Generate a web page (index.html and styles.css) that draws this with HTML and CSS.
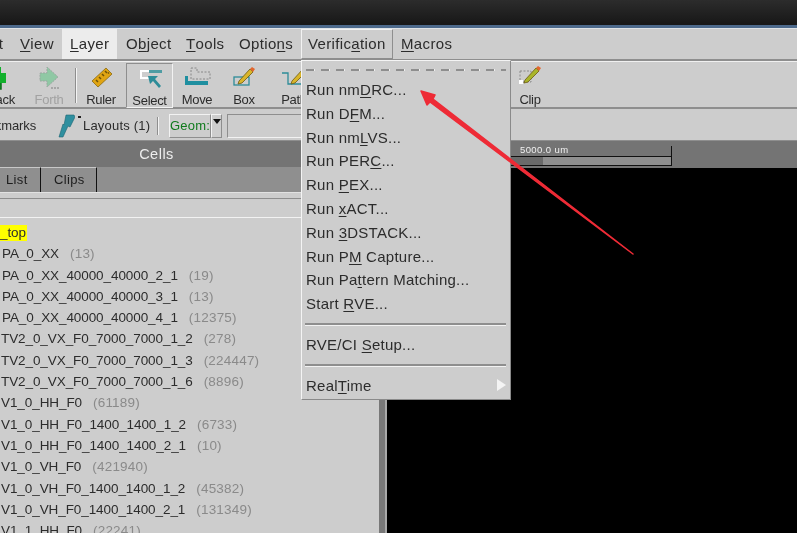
FILE: index.html
```html
<!DOCTYPE html>
<html lang="en">
<head>
<meta charset="utf-8">
<title>Layout editor</title>
<link rel="stylesheet" href="styles.css">
</head>
<body>
<div class="app">
  <div class="titlebar"></div>
  <nav class="menubar">
    <span class="m m-edit">Edit</span>
    <span class="m m-view"><u>V</u>iew</span>
    <span class="m m-layer"><u>L</u>ayer</span>
    <span class="m m-object">O<u>b</u>ject</span>
    <span class="m m-tools"><u>T</u>ools</span>
    <span class="m m-options">Optio<u>n</u>s</span>
    <span class="m m-verif">Verific<u>a</u>tion</span>
    <span class="m m-macros"><u>M</u>acros</span>
  </nav>
  <div class="toolbar">
    <div class="tool t-back">
      <svg class="ico ico-over" viewBox="10 0 24 24"><path d="M11 2h11v6h5v10h-5v6H11v-6H5V8h6z" fill="#12b02c"/><path d="M22 18v6H11" fill="none" stroke="#0a6e1a" stroke-width="1.5"/></svg>
      <span>Back</span>
    </div>
    <div class="tool t-forth">
      <svg class="ico" viewBox="0 0 24 24"><path d="M3 8h7V2l11 10-11 10v-6H3z" fill="#8fc8a4" stroke="#9aa7a0" stroke-dasharray="2 1"/><path d="M14 23h8" stroke="#999" stroke-width="1.5" stroke-dasharray="2 1"/></svg>
      <span>Forth</span>
    </div>
    <div class="vsep"></div>
    <div class="tool t-ruler">
      <svg class="ico" viewBox="0 0 24 24"><path d="M3 16 17 3l6 6L9 22z" fill="#e0a412" stroke="#8a6a10" stroke-width=".8"/><path d="M7 15l2 2M10 12l2 2M13 9l2 2M16 6l2 2M19 7.500l1 1" stroke="#6d5208" stroke-width="1.500"/></svg>
      <span>Ruler</span>
    </div>
    <div class="tool t-select">
      <svg class="ico" viewBox="0 0 24 24"><path d="M2 4h9v2H4v5h8v2H2z" fill="#fff"/><rect x="11" y="4" width="13" height="3" fill="#4f9ca3"/><path d="M10 10h10l-3 3 6 7-2 2-6-7-3 3z" fill="#2d8c98"/></svg>
      <span>Select</span>
    </div>
    <div class="tool t-move">
      <svg class="ico ico-wide" viewBox="0 0 30 24"><path d="M3 11h3v5h20v4H3z" fill="#1f8fa0"/><path d="M9 3h6v4h13v7H9z" fill="none" stroke="#888" stroke-dasharray="2 1.500"/></svg>
      <span>Move</span>
    </div>
    <div class="tool t-box">
      <svg class="ico" viewBox="0 0 24 24"><rect x="2" y="12" width="15" height="8" fill="none" stroke="#2d8c98" stroke-width="1.300"/><path d="M7 16 18 4l3 3L10 18l-4 1z" fill="#d9b52a" stroke="#6c5a12" stroke-width=".8"/><path d="M18 4l2-2 3 2-2 3z" fill="#e2662d"/></svg>
      <span>Box</span>
    </div>
    <div class="tool t-path">
      <svg class="ico" viewBox="0 0 24 24"><path d="M0 8h6v11h18" fill="none" stroke="#2d8c98" stroke-width="1.300"/><path d="M10 16 21 4l3 3L13 18l-4 1z" fill="#d9b52a" stroke="#6c5a12" stroke-width=".8"/></svg>
      <span>Path</span>
    </div>
    <div class="tool t-clip">
      <svg class="ico" viewBox="0 0 24 24"><rect x="2" y="6" width="11" height="11" fill="none" stroke="#8a8a8a" stroke-dasharray="2 1.500"/><rect x="1" y="15" width="4" height="4" fill="#fff"/><path d="M7 15 18 3l3 3L10 17l-4 1z" fill="#a9b52a" stroke="#6c5a12" stroke-width=".8"/><path d="M18 3l2-2 3 2-2 3z" fill="#e2662d"/></svg>
      <span>Clip</span>
    </div>
  </div>
  <div class="subbar">
    <span class="s-book">Bookmarks</span>
    <svg class="s-ico" viewBox="0 0 18 24"><path d="M9 1h8l1 2-5 10-2-1-5 11H2l4-13 1 1z" fill="#2f8f9f" stroke="#1d6472" stroke-width=".6"/></svg>
    <i class="s-dot"></i>
    <span class="s-layouts">Layouts (1)</span>
    <i class="s-sep"></i>
    <span class="s-geom">Geom:</span>
    <span class="s-drop"><i></i></span>
    <span class="s-entry"></span>
  </div>
  <div class="main">
    <section class="cells">
      <header class="cells-head"><span>Cells</span></header>
      <div class="tabs">
        <span class="tab tab-list">List</span>
        <span class="tab tab-clips">Clips</span>
      </div>
      <div class="filter"></div>
      <ul class="list">
        <li><b class="hl">_top</b></li>
        <li class="in">PA_0_XX<em>(13)</em></li>
        <li class="in">PA_0_XX_40000_40000_2_1<em>(19)</em></li>
        <li class="in">PA_0_XX_40000_40000_3_1<em>(13)</em></li>
        <li class="in">PA_0_XX_40000_40000_4_1<em>(12375)</em></li>
        <li>TV2_0_VX_F0_7000_7000_1_2<em>(278)</em></li>
        <li>TV2_0_VX_F0_7000_7000_1_3<em>(224447)</em></li>
        <li>TV2_0_VX_F0_7000_7000_1_6<em>(8896)</em></li>
        <li>V1_0_HH_F0<em>(61189)</em></li>
        <li>V1_0_HH_F0_1400_1400_1_2<em>(6733)</em></li>
        <li>V1_0_HH_F0_1400_1400_2_1<em>(10)</em></li>
        <li>V1_0_VH_F0<em>(421940)</em></li>
        <li>V1_0_VH_F0_1400_1400_1_2<em>(45382)</em></li>
        <li>V1_0_VH_F0_1400_1400_2_1<em>(131349)</em></li>
        <li>V1_1_HH_F0<em>(22241)</em></li>
      </ul>
    </section>
    <div class="splitter"></div>
    <section class="view">
      <div class="ruler">
        <span class="ruler-text">5000.0 um</span>
        <div class="ruler-bar"><i></i></div>
      </div>
      <div class="canvas"></div>
    </section>
  </div>

  <div class="menu">
    <div class="tearoff"></div>
    <div class="mi">Run nm<u>D</u>RC...</div>
    <div class="mi">Run D<u>F</u>M...</div>
    <div class="mi">Run nm<u>L</u>VS...</div>
    <div class="mi">Run PER<u>C</u>...</div>
    <div class="mi">Run <u>P</u>EX...</div>
    <div class="mi">Run <u>x</u>ACT...</div>
    <div class="mi">Run <u>3</u>DSTACK...</div>
    <div class="mi">Run P<u>M</u> Capture...</div>
    <div class="mi">Run Pa<u>t</u>tern Matching...</div>
    <div class="mi">Start <u>R</u>VE...</div>
    <div class="msep"></div>
    <div class="mi">RVE/CI <u>S</u>etup...</div>
    <div class="msep"></div>
    <div class="mi mi-sub">Real<u>T</u>ime<i class="caret"></i></div>
  </div>

  <svg class="arrow" viewBox="0 0 797 533"><path d="M633 254 433 99 435 95 421 91 427 105 430 102z" fill="#ee2b36" stroke="#ee2b36" stroke-width="1.500" stroke-linejoin="round"/></svg>
</div>
</body>
</html>
```
FILE: styles.css
```css
* { box-sizing: border-box; }
html, body { margin: 0; padding: 0; }
body { width: 797px; height: 533px; overflow: hidden; background: #cdcdcd; }
.app {
  position: relative; width: 797px; height: 533px; overflow: hidden;
  display: flex; flex-direction: column;
  background: #cdcdcd; color: #2c2c2c;
  font: 15px/18px "Liberation Sans", Arial, sans-serif;
  letter-spacing: .35px;
  filter: blur(.35px);
}
u { text-underline-offset: 2px; text-decoration-thickness: 1px; }

.titlebar {
  height: 29px; flex: none;
  background: linear-gradient(#2c2c2c, #181818 85%);
  border-bottom: 1px solid #dfe3e6;
  box-shadow: inset 0 -3px 0 #4d6a8c;
}

.menubar {
  height: 32px; flex: none; display: flex; align-items: stretch;
  border-bottom: 2px solid #8e8e8e;
}
.m { display: flex; align-items: center; height: 30px; }
.m-edit { margin-left: -24px; width: 32px; }
.m-view { margin-left: 12px; width: 36px; }
.m-layer { margin-left: 6px; width: 55px; padding-left: 8px; background: #ececec; }
.m-object { margin-left: 9px; width: 48px; }
.m-tools { margin-left: 12px; width: 38px; }
.m-options { margin-left: 15px; width: 54px; }
.m-verif {
  margin-left: 8px; width: 92px; padding-left: 6px;
  border-top: 1px solid #f2f2f2; border-left: 1px solid #f2f2f2;
  border-right: 1px solid #8e8e8e; border-bottom: 1px solid #8e8e8e;
}
.m-macros { margin-left: 8px; }

.toolbar {
  height: 48px; flex: none; display: flex; align-items: flex-start;
  border-bottom: 2px solid #8e8e8e; border-top: 1px solid #f0f0f0;
}
.tool {
  display: flex; flex-direction: column; align-items: center;
  height: 46px; font-size: 13px; letter-spacing: -.3px; line-height: 16px; white-space: nowrap;
}
.ico { width: 24px; height: 24px; margin: 3px 0 3px; flex: none; overflow: hidden; }
.ico-wide { width: 30px; }
.ico-over { overflow: visible; }
.t-back { width: 40px; margin-left: -19px; }
.t-forth { width: 40px; margin-left: 8px; color: #a2a2a2; }
.vsep { width: 2px; height: 35px; margin: 6px 0 0 6px; background: #8e8e8e; border-right: 1px solid #f4f4f4; }
.t-ruler { width: 36px; margin-left: 6px; }
.t-select {
  width: 47px; height: 45px; margin: 1px 0 0 7px;
  border: 1px solid #f2f2f2; border-color: #8e8e8e #f2f2f2 #f2f2f2 #8e8e8e;
}
.t-select .ico { margin: 2px 0 3px; }
.t-move { width: 34px; margin-left: 7px; }
.t-box { width: 30px; margin-left: 15px; }
.t-path { width: 34px; margin-left: 18px; }
.t-clip { width: 24px; margin-left: 207px; }

.subbar {
  height: 32px; flex: none; display: flex; align-items: center; padding-top: 2px;
  font-size: 13px; letter-spacing: .2px;
  border-bottom: 1px solid #8e8e8e;
}
.s-book { margin-left: -28px; width: 64px; white-space: nowrap; letter-spacing: -.1px; }
.s-ico { width: 18px; height: 24px; margin-left: 21px; flex: none; }
.s-dot { width: 3px; height: 2px; background: #222; margin: -18px 0 0 3px; flex: none; }
.s-layouts { margin-left: 2px; width: 74px; white-space: nowrap; }
.s-sep { width: 2px; height: 18px; background: #8e8e8e; border-right: 1px solid #f2f2f2; flex: none; }
.s-geom {
  margin-left: 10px; width: 42px; height: 24px; line-height: 22px; text-align: center;
  color: #0f7a1c; border: 1px solid; border-color: #f2f2f2 #8e8e8e #8e8e8e #f2f2f2; flex: none;
}
.s-drop {
  width: 11px; height: 24px; display: flex; justify-content: center; padding-top: 4px; flex: none;
  border: 1px solid; border-color: #f2f2f2 #8e8e8e #8e8e8e #f2f2f2;
}
.s-drop i { width: 0; height: 0; border: 4px solid transparent; border-top: 5px solid #111; border-bottom: 0; }
.s-entry {
  margin-left: 5px; width: 270px; height: 24px; flex: none;
  border: 1px solid; border-color: #8e8e8e #f2f2f2 #f2f2f2 #8e8e8e;
}

.main { flex: 1; min-height: 0; display: flex; }
.cells { width: 379px; flex: none; display: flex; flex-direction: column; }
.cells-head {
  height: 26px; flex: none; background: #747474; color: #ededed; text-align: center;
  padding-right: 66px; line-height: 27px; letter-spacing: .5px; font-size: 14.5px;
}
.tabs { height: 26px; flex: none; background: #8f8f8f; display: flex; align-items: stretch; border-bottom: 1px solid #e2e2e2; }
.tab { display: flex; align-items: center; font-size: 13px; height: 25px; border-right: 1px solid #111; border-top: 1px solid #c8c8c8; color: #1d1d1d; }
.tab-list { width: 41px; padding-left: 6px; }
.tab-clips { width: 56px; padding-left: 13px; }
.filter { height: 20px; flex: none; margin-top: 5px; border-top: 1px solid #8e8e8e; border-bottom: 1px solid #f2f2f2; }
.list { list-style: none; margin: 0; padding: 4px 0 0 1px; white-space: nowrap; }
.list li { height: 21.3px; line-height: 21px; font-size: 13.5px; letter-spacing: -.08px; }
.list li.in { padding-left: 1px; }
.list em { font-style: normal; color: #8a8a8a; margin-left: 11px; letter-spacing: .2px; }
.hl { font-weight: normal; background: #ffff00; margin-left: -1px; padding: 0 1px 0 0; display: inline-block; height: 16px; line-height: 16px; }

.splitter { width: 8px; flex: none; background: #787878; border-right: 2px solid #a8a8a8; }
.view { flex: 1; min-width: 0; display: flex; flex-direction: column; }
.ruler { height: 27px; flex: none; background: #747474; padding-left: 133px; position: relative; }
.ruler-text { display: block; height: 15px; font-size: 9.5px; line-height: 17px; color: #f0f0f0; letter-spacing: .4px; }
.ruler-bar {
  width: 162px; height: 10px; background: #8f8f8f; margin-left: -10px;
  border-top: 1px solid #111; border-bottom: 1px solid #111; border-right: 1px solid #111;
}
.ruler-bar i { display: block; width: 33px; height: 100%; background: #6a6a6a; }
.ruler::after { content: ""; position: absolute; left: 284px; top: 5px; width: 1px; height: 20px; background: #111; }
.canvas { flex: 1; background: #000; }

.menu {
  position: absolute; left: 301px; top: 60px; width: 210px; height: 340px;
  background: #cdcdcd; padding: 1px 4px 0 4px;
  border: 1px solid; border-color: #f4f4f4 #8a8a8a #8a8a8a #f4f4f4;
  font-size: 15px; letter-spacing: .25px;
}
.tearoff {
  height: 2px; margin: 7px 0 7px;
  background: repeating-linear-gradient(90deg, #8e8e8e 0 8px, #eeeeee 8px 9px, transparent 9px 15px);
}
.mi { height: 23.8px; line-height: 23px; white-space: nowrap; position: relative; }
.msep { height: 17px; margin: 0 0 0 -1px; position: relative; }
.msep::before { content: ""; position: absolute; left: 0; right: 0; top: 7px; height: 2px; background: #8e8e8e; border-bottom: 1px solid #f2f2f2; }
.caret {
  position: absolute; right: 0; top: 5px; width: 0; height: 0;
  border: 6px solid transparent; border-left: 9px solid #f4f4f4; border-right: 0;
}
.arrow { position: absolute; inset: 0; width: 797px; height: 533px; pointer-events: none; }
```
